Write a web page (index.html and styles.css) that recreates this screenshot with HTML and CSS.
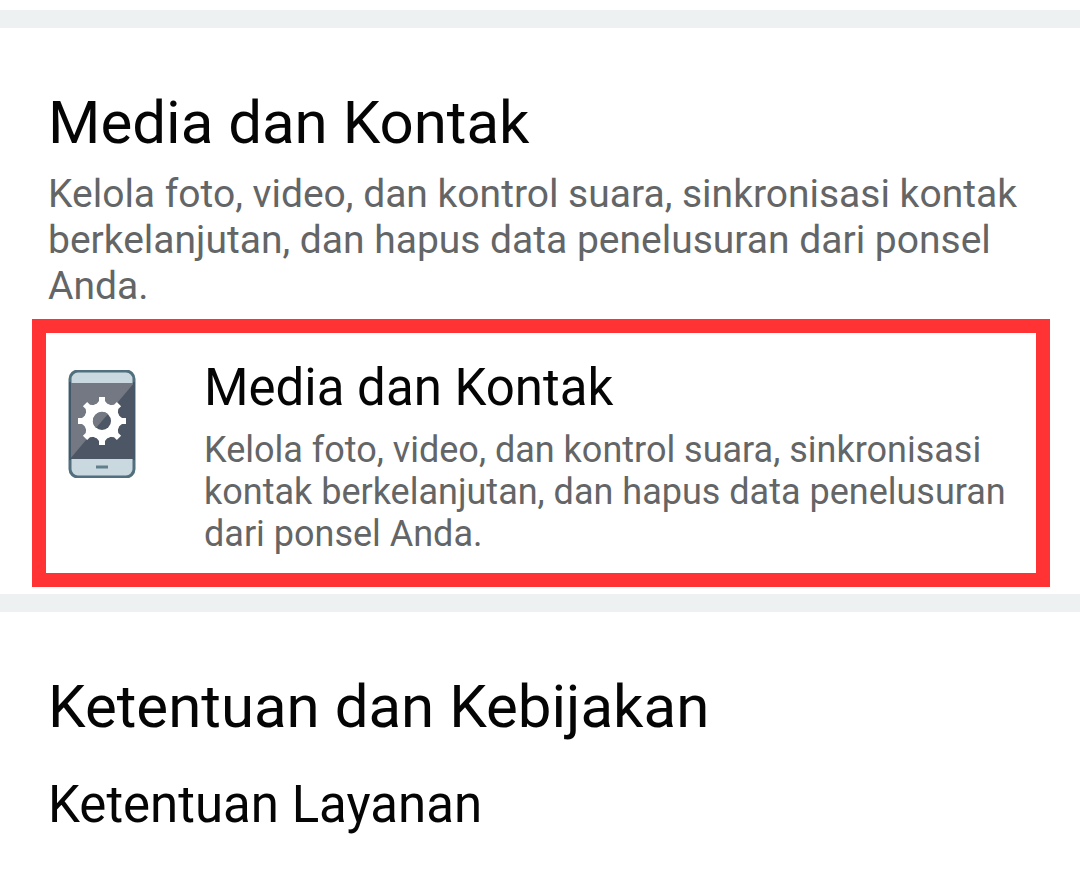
FILE: index.html
```html
<!DOCTYPE html>
<html lang="id">
<head>
    <meta charset="UTF-8">
    <meta name="viewport" content="width=device-width, initial-scale=1.0">
    <title>Pengaturan</title>
    <link rel="stylesheet" href="styles.css">
</head>
<body>
    <main>
        <section class="section">
            <h2>Media dan Kontak</h2>
            <p class="description">Kelola foto, video, dan kontrol suara, sinkronisasi kontak berkelanjutan, dan hapus data penelusuran dari ponsel Anda.</p>
            <a class="item highlight" href="#media">
                <svg class="icon" viewBox="0 0 68 108" aria-hidden="true">
                    <rect x="2" y="1" width="64" height="106" rx="8" fill="#c9d9df" stroke="#526f7e" stroke-width="3"/>
                    <path d="M2 13h64v76H2z" fill="#4d5665"/>
                    <path d="M2 13h64L2 89z" fill="#737883"/>
                    <path d="M2 12v78M66 12v78" stroke="#43586a" stroke-width="2"/>
                    <path d="M28 97h12" stroke="#607f8c" stroke-width="3"/>
                    <g fill="#fff">
                        <circle cx="34" cy="51" r="18"/>
                        <path id="teeth" d="M27 36l4-5v-4h6v4l4 5v30l-4 5v4h-6v-4l-4-5z"/>
                        <use href="#teeth" transform="rotate(45 34 51)"/>
                        <use href="#teeth" transform="rotate(90 34 51)"/>
                        <use href="#teeth" transform="rotate(135 34 51)"/>
                    </g>
                    <circle cx="34" cy="51" r="9" fill="#4d5665"/>
                    <path d="M40 44L28 58A9 9 0 0 1 40 44z" fill="#737883"/>
                </svg>
                <div class="text">
                    <h3>Media dan Kontak</h3>
                    <p>Kelola foto, video, dan kontrol suara, sinkronisasi kontak berkelanjutan, dan hapus data penelusuran dari ponsel Anda.</p>
                </div>
            </a>
        </section>
        <section class="section">
            <h2>Ketentuan dan Kebijakan</h2>
            <a class="link" href="#layanan">Ketentuan Layanan</a>
        </section>
    </main>
</body>
</html>
```

FILE: styles.css
```css
:root{
    --text: #050505;
    --muted: #636566;
    --divider: #edf1f2;
    --red: #ff3333;
}
body{
    font-family: Roboto, sans-serif;
    margin: 0;
    padding-top: 10px;
    background: #fff;
    color: var(--text);
}
h2, h3, p{
    margin: 0;
    font-weight: 400;
}
a{
    color: inherit;
    text-decoration: none;
}
.section{
    border-top: 18px solid var(--divider);
    padding: 60px 30px 7px 32px;
}
h2{
    padding-left: 16px;
    font-size: 60px;
    line-height: 70px;
}
.description{
    padding: 13px 16px 10px;
    color: var(--muted);
    font-size: 39px;
    line-height: 46px;
}
.item{
    display: flex;
    gap: 68px;
    padding: 24px 20px 18px 22px;
}
.highlight{
    border: 14px solid var(--red);
}
.icon{
    flex: none;
    width: 68px;
    height: 108px;
    margin-top: 13px;
}
.text h3{
    font-size: 51px;
    line-height: 62px;
}
.text p{
    padding-top: 10px;
    color: var(--muted);
    font-size: 36px;
    line-height: 42px;
}
.link{
    display: block;
    padding: 32px 16px 0;
    font-size: 51px;
    line-height: 62px;
}
```
